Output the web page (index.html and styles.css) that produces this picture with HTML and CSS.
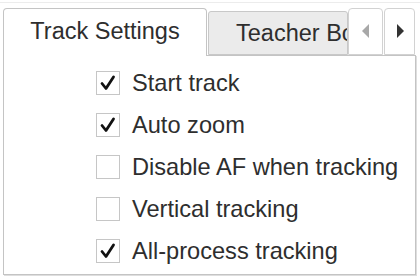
FILE: index.html
```html
<!DOCTYPE html>
<html>
<head>
<meta charset="utf-8">
<link rel="stylesheet" href="styles.css">
</head>
<body>
<div class="frame">
  <div class="tabbar">
    <div class="tab active">Track Settings</div>
    <div class="tab inactive"><span>Teacher Board</span></div>
    <div class="arrow-btn"><svg width="10" height="16" viewBox="0 0 10 16"><path d="M8 1 L1 8 L8 15 Z" fill="#a8a8a8"/></svg></div>
    <div class="arrow-btn"><svg width="10" height="16" viewBox="0 0 10 16"><path d="M2 1 L9 8 L2 15 Z" fill="#333"/></svg></div>
  </div>
  <div class="panel">
    <div class="row"><span class="box"><svg viewBox="0 0 22 22" width="22" height="22"><path d="M5 11.5 L9 16.5 L16.5 5" fill="none" stroke="#111" stroke-width="2.8" stroke-linecap="round" stroke-linejoin="round"/></svg></span><span class="label">Start track</span></div>
    <div class="row"><span class="box"><svg viewBox="0 0 22 22" width="22" height="22"><path d="M5 11.5 L9 16.5 L16.5 5" fill="none" stroke="#111" stroke-width="2.8" stroke-linecap="round" stroke-linejoin="round"/></svg></span><span class="label">Auto zoom</span></div>
    <div class="row"><span class="box"></span><span class="label">Disable AF when tracking</span></div>
    <div class="row"><span class="box"></span><span class="label">Vertical tracking</span></div>
    <div class="row"><span class="box"><svg viewBox="0 0 22 22" width="22" height="22"><path d="M5 11.5 L9 16.5 L16.5 5" fill="none" stroke="#111" stroke-width="2.8" stroke-linecap="round" stroke-linejoin="round"/></svg></span><span class="label">All-process tracking</span></div>
  </div>
</div>
</body>
</html>
```
FILE: styles.css
```css
html, body {
  margin: 0;
  padding: 0;
  background: #fff;
}
body {
  font-family: "Liberation Sans", Arial, sans-serif;
  color: #2e2e2e;
  width: 420px;
  height: 280px;
  overflow: hidden;
}
.frame {
  margin-top: 2px;
  border-top: 1px solid #ececec;
  padding: 5px 0 0 3px;
}
.tabbar {
  display: flex;
  align-items: flex-end;
  height: 47px;
  position: relative;
  z-index: 1;
}
.tab {
  box-sizing: border-box;
  display: flex;
  align-items: center;
  font-size: 23.5px;
  white-space: nowrap;
  overflow: hidden;
}
.tab.active {
  width: 204px;
  height: 48px;
  margin-bottom: -1px;
  justify-content: center;
  background: #fff;
  border: 1px solid #c4c4c4;
  border-bottom: none;
  border-radius: 4px 4px 0 0;
  padding-bottom: 2px;
}
.tab.inactive {
  width: 140px;
  height: 44px;
  margin-left: 1px;
  padding-left: 27px;
  background: #ebebeb;
  border: 1px solid #c8c8c8;
  border-radius: 3px 3px 0 0;
}
.arrow-btn {
  box-sizing: border-box;
  width: 35px;
  height: 47px;
  display: flex;
  align-items: center;
  justify-content: center;
  background: #fff;
  border: 1px solid #d2d2d2;
  border-radius: 4px 4px 0 0;
  padding-bottom: 2px;
}
.arrow-btn + .arrow-btn {
  width: 31px;
  margin-left: 1px;
}
.panel {
  box-sizing: border-box;
  width: 413px;
  height: 220px;
  border: 1px solid #c4c4c4;
  box-shadow: 1px 1px 0 #dedede;
  padding: 6px 0 0 92px;
  display: flex;
  flex-direction: column;
}
.row {
  height: 42px;
  display: flex;
  align-items: center;
  gap: 12px;
}
.box {
  box-sizing: border-box;
  width: 24px;
  height: 24px;
  border: 1px solid #c6c6c6;
  background: #fff;
  display: flex;
  align-items: center;
  justify-content: center;
}
.box svg {
  display: block;
}
.label {
  font-size: 23.6px;
  white-space: nowrap;
}
```
